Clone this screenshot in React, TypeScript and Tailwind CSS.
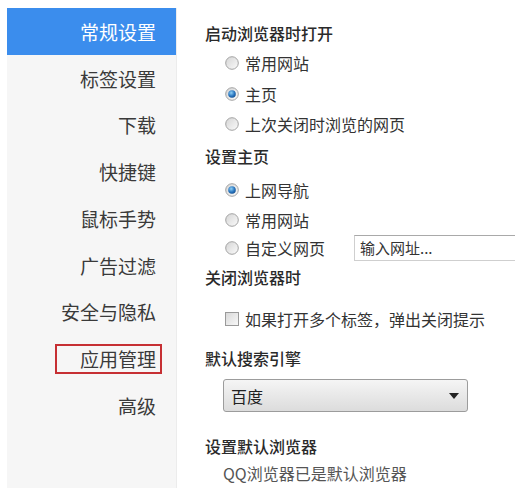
import type { ReactNode } from 'react'

const font = { fontFamily: '"Noto Sans CJK SC", "Liberation Sans", sans-serif' }

const navItems = ['常规设置', '标签设置', '下载', '快捷键', '鼠标手势', '广告过滤', '安全与隐私', '应用管理', '高级']

function Radio({ checked }: { checked?: boolean }) {
  return (
    <svg width="14" height="14" viewBox="0 0 14 14" className="shrink-0">
      <defs>
        <linearGradient id="rbg" x1="0" y1="0" x2="1" y2="1">
          <stop offset="0" stopColor="#d4d4d4" />
          <stop offset="1" stopColor="#fbfbfb" />
        </linearGradient>
        <radialGradient id="rdot" cx="0.4" cy="0.35" r="0.7">
          <stop offset="0" stopColor="#8fd0f5" />
          <stop offset="0.6" stopColor="#2a76c0" />
          <stop offset="1" stopColor="#124f8f" />
        </radialGradient>
      </defs>
      <circle cx="7" cy="7" r="6.3" fill="url(#rbg)" stroke="#a3a3a3" strokeWidth="1" />
      {checked && <circle cx="7" cy="7" r="3.8" fill="url(#rdot)" />}
    </svg>
  )
}

function Row({ h, children, className = '' }: { h: string; children: ReactNode; className?: string }) {
  return <div className={`flex items-center whitespace-nowrap ${h} ${className}`}>{children}</div>
}

function Heading({ h, children }: { h: string; children: ReactNode }) {
  return (
    <Row h={h}>
      <span className="text-[16px] font-medium text-[#2a2a2a] leading-none">{children}</span>
    </Row>
  )
}

function RadioRow({ h, checked, label, children }: { h: string; checked?: boolean; label: string; children?: ReactNode }) {
  return (
    <Row h={h} className="pl-[20px]">
      <Radio checked={checked} />
      <span className="ml-[6px] shrink-0 text-[16px] text-[#333] leading-none">{label}</span>
      {children}
    </Row>
  )
}

export default function App() {
  return (
    <div className="w-[515px] h-[494px] bg-white flex overflow-hidden" style={font}>
      <div className="ml-[7px] mt-[8px] w-[170px] h-[480px] bg-[#f6f6f6] border-r border-[#ececec] flex flex-col shrink-0">
        {navItems.map((item, i) => {
          const active = i === 0
          const boxed = item === '应用管理'
          return (
            <div
              key={item}
              className={`h-[46.75px] flex items-center justify-end text-[19px] leading-none ${
                active ? 'bg-[#3b8ded] text-white pr-[20px]' : 'text-[#3a3a3a]'
              } ${boxed ? 'pr-[14px]' : active ? '' : 'pr-[20px]'}`}
            >
              {boxed ? (
                <span className="border-2 border-[#c62f33] h-[30px] flex items-center pl-[23px] pr-[4px]">{item}</span>
              ) : (
                item
              )}
            </div>
          )
        })}
      </div>

      <div className="flex-1 min-w-0 pl-[28px] pt-[18px] flex flex-col">
        <Heading h="h-[30px]">启动浏览器时打开</Heading>
        <RadioRow h="h-[30px]" label="常用网站" />
        <RadioRow h="h-[31px]" checked label="主页" />
        <RadioRow h="h-[29px]" label="上次关闭时浏览的网页" />

        <Heading h="h-[36px]">设置主页</Heading>
        <RadioRow h="h-[31px]" checked label="上网导航" />
        <RadioRow h="h-[29px]" label="常用网站" />
        <RadioRow h="h-[28px]" label="自定义网页">
          <div className="ml-[29px] h-[26px] w-[200px] shrink-0 border border-[#cfcfcf] border-t-[#a9a9a9] flex items-center pl-[5px] text-[15px] text-[#333]">
            输入网址...
          </div>
        </RadioRow>

        <Heading h="h-[30px]">关闭浏览器时</Heading>
        <Row h="h-[54px]" className="pl-[20px]">
          <span className="w-[14px] h-[14px] shrink-0 border border-[#9a9a9a] bg-gradient-to-br from-[#d9d9d9] to-[#f8f8f8]" />
          <span className="ml-[6px] text-[16px] text-[#333] leading-none">如果打开多个标签，弹出关闭提示</span>
        </Row>

        <Heading h="h-[24px]">默认搜索引擎</Heading>
        <div className="mt-[9px] ml-[18px] w-[245px] h-[33px] shrink-0 rounded-[3px] border border-[#9c9c9c] bg-gradient-to-b from-[#f5f5f5] to-[#dcdcdc] flex items-center justify-between pl-[7px] pr-[8px]">
          <span className="text-[16px] text-[#222] leading-none">百度</span>
          <svg width="10" height="6" viewBox="0 0 10 6">
            <path d="M0 0 L10 0 L5 6 Z" fill="#222" />
          </svg>
        </div>

        <Heading h="h-[32px] mt-[18px]">设置默认浏览器</Heading>
        <Row h="h-[22px]" className="pl-[18px]">
          <span className="text-[16px] text-[#555] leading-none">QQ浏览器已是默认浏览器</span>
        </Row>
      </div>
    </div>
  )
}
